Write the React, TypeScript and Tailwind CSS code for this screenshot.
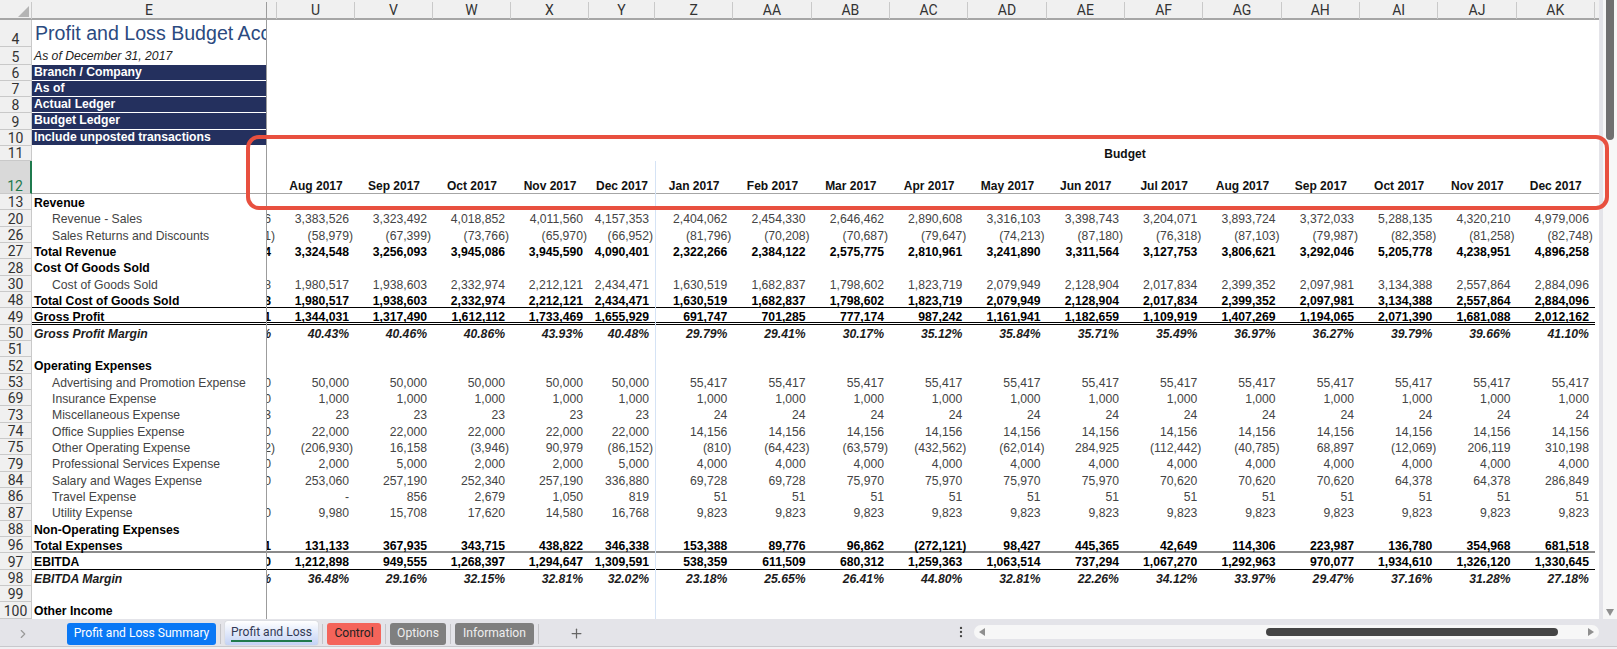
import { ChevronRight, EllipsisVertical, Plus } from "lucide-react";

const cols =
  "grid grid-cols-[32px_235px_10px_78px_78px_78px_78px_66px_repeat(12,78.33px)]";

const letters = ["U", "V", "W", "X", "Y", "Z", "AA", "AB", "AC", "AD", "AE", "AF", "AG", "AH", "AI", "AJ", "AK"];
const months = ["Aug 2017", "Sep 2017", "Oct 2017", "Nov 2017", "Dec 2017", "Jan 2017", "Feb 2017", "Mar 2017", "Apr 2017", "May 2017", "Jun 2017", "Jul 2017", "Aug 2017", "Sep 2017", "Oct 2017", "Nov 2017", "Dec 2017"];

function fill(a: string, b: string) {
  return [...Array(5).fill(a), ...Array(12).fill(b)] as string[];
}
function split(s: string) {
  return s.split(" ");
}

type Row = {
  n: number;
  label?: string;
  t?: string;
  kind?: "plain" | "sub" | "bold" | "margin";
  line?: string;
  vals?: string[];
};

const cogs = split("1,980,517 1,938,603 2,332,974 2,212,121 2,434,471 1,630,519 1,682,837 1,798,602 1,823,719 2,079,949 2,128,904 2,017,834 2,399,352 2,097,981 3,134,388 2,557,864 2,884,096");

const rows: Row[] = [
  { n: 13, label: "Revenue", kind: "bold" },
  { n: 20, label: "Revenue - Sales", kind: "sub", t: "6", vals: split("3,383,526 3,323,492 4,018,852 4,011,560 4,157,353 2,404,062 2,454,330 2,646,462 2,890,608 3,316,103 3,398,743 3,204,071 3,893,724 3,372,033 5,288,135 4,320,210 4,979,006") },
  { n: 26, label: "Sales Returns and Discounts", kind: "sub", t: "1)", vals: split("(58,979) (67,399) (73,766) (65,970) (66,952) (81,796) (70,208) (70,687) (79,647) (74,213) (87,180) (76,318) (87,103) (79,987) (82,358) (81,258) (82,748)") },
  { n: 27, label: "Total Revenue", kind: "bold", t: "4", vals: split("3,324,548 3,256,093 3,945,086 3,945,590 4,090,401 2,322,266 2,384,122 2,575,775 2,810,961 3,241,890 3,311,564 3,127,753 3,806,621 3,292,046 5,205,778 4,238,951 4,896,258") },
  { n: 28, label: "Cost Of Goods Sold", kind: "bold" },
  { n: 30, label: "Cost of Goods Sold", kind: "sub", t: "8", vals: cogs },
  { n: 48, label: "Total Cost of Goods Sold", kind: "bold", t: "8", vals: cogs, line: "border-b border-black" },
  { n: 49, label: "Gross Profit", kind: "bold", t: "1", line: "border-b-[3px] border-double border-black", vals: split("1,344,031 1,317,490 1,612,112 1,733,469 1,655,929 691,747 701,285 777,174 987,242 1,161,941 1,182,659 1,109,919 1,407,269 1,194,065 2,071,390 1,681,088 2,012,162") },
  { n: 50, label: "Gross Profit Margin", kind: "margin", t: "%", vals: split("40.43% 40.46% 40.86% 43.93% 40.48% 29.79% 29.41% 30.17% 35.12% 35.84% 35.71% 35.49% 36.97% 36.27% 39.79% 39.66% 41.10%") },
  { n: 51 },
  { n: 52, label: "Operating Expenses", kind: "bold" },
  { n: 53, label: "Advertising and Promotion Expense", kind: "sub", t: "0", vals: fill("50,000", "55,417") },
  { n: 69, label: "Insurance Expense", kind: "sub", t: "0", vals: fill("1,000", "1,000") },
  { n: 73, label: "Miscellaneous Expense", kind: "sub", t: "3", vals: fill("23", "24") },
  { n: 74, label: "Office Supplies Expense", kind: "sub", t: "0", vals: fill("22,000", "14,156") },
  { n: 75, label: "Other Operating Expense", kind: "sub", t: "2)", vals: split("(206,930) 16,158 (3,946) 90,979 (86,152) (810) (64,423) (63,579) (432,562) (62,014) 284,925 (112,442) (40,785) 68,897 (12,069) 206,119 310,198") },
  { n: 79, label: "Professional Services Expense", kind: "sub", t: "0", vals: split("2,000 5,000 2,000 2,000 5,000 4,000 4,000 4,000 4,000 4,000 4,000 4,000 4,000 4,000 4,000 4,000 4,000") },
  { n: 84, label: "Salary and Wages Expense", kind: "sub", t: "0", vals: split("253,060 257,190 252,340 257,190 336,880 69,728 69,728 75,970 75,970 75,970 75,970 70,620 70,620 70,620 64,378 64,378 286,849") },
  { n: 86, label: "Travel Expense", kind: "sub", vals: split("- 856 2,679 1,050 819 51 51 51 51 51 51 51 51 51 51 51 51") },
  { n: 87, label: "Utility Expense", kind: "sub", t: "0", vals: split("9,980 15,708 17,620 14,580 16,768 9,823 9,823 9,823 9,823 9,823 9,823 9,823 9,823 9,823 9,823 9,823 9,823") },
  { n: 88, label: "Non-Operating Expenses", kind: "bold" },
  { n: 96, label: "Total Expenses", kind: "bold", t: "1", line: "border-b-2 border-[#8a8a8a]", vals: split("131,133 367,935 343,715 438,822 346,338 153,388 89,776 96,862 (272,121) 98,427 445,365 42,649 114,306 223,987 136,780 354,968 681,518") },
  { n: 97, label: "EBITDA", kind: "bold", t: "0", line: "border-b border-black", vals: split("1,212,898 949,555 1,268,397 1,294,647 1,309,591 538,359 611,509 680,312 1,259,363 1,063,514 737,294 1,067,270 1,292,963 970,077 1,934,610 1,326,120 1,330,645") },
  { n: 98, label: "EBITDA Margin", kind: "margin", t: "%", vals: split("36.48% 29.16% 32.15% 32.81% 32.02% 23.18% 25.65% 26.41% 44.80% 32.81% 22.26% 34.12% 33.97% 29.47% 37.16% 31.28% 27.18%") },
  { n: 99 },
  { n: 100, label: "Other Income", kind: "bold" },
];

const navy = ["Branch / Company", "As of", "Actual Ledger", "Budget Ledger", "Include unposted transactions"];

function textStyle(kind?: Row["kind"]) {
  if (kind === "bold") return "font-bold text-black";
  if (kind === "margin") return "font-bold italic text-[#1c1c1c]";
  return "text-[#444444]";
}

function RowNo({ n, h, active }: { n: number; h: string; active?: boolean }) {
  return (
    <div
      className={`${h} flex items-end justify-center border-b border-r border-[#c9c9c9] font-[Roboto,sans-serif] text-[14px] leading-[14px] ${
        active ? "border-r-2 border-r-[#1f7a4d] bg-[#d9d9d9] text-[#1f7a4d]" : "bg-[#f0f0f0] text-[#333333]"
      }`}
    >
      {n}
    </div>
  );
}

function FreezeCell({ h, children }: { h: string; children?: React.ReactNode }) {
  return <div className={`${h} min-w-0 overflow-hidden border-r border-[#9c9c9c]`}>{children}</div>;
}

function Value({ v, kind }: { v: string; kind?: Row["kind"] }) {
  const neg = v.endsWith(")");
  return (
    <div className={`flex h-full items-center justify-end whitespace-nowrap pr-[6px] pt-[1px] ${textStyle(kind)}`}>
      <span className={neg ? "mr-[-4px]" : ""}>{v}</span>
    </div>
  );
}

function ColumnHeader() {
  return (
    <div className={`${cols} h-[20px] border-b-2 border-[#a6a6a6] bg-[#f0f0f0] pt-[2px] font-[Roboto,sans-serif] text-[14px] leading-[17px] text-[#333333]`}>
      <div className="flex items-end justify-end border-r border-[#c9c9c9] p-[2px]">
        <svg width="11" height="11" viewBox="0 0 11 11">
          <polygon points="11,0 11,11 0,11" fill="#b4b4b4" />
        </svg>
      </div>
      <div className="border-r border-[#9c9c9c] text-center">E</div>
      <div className="border-r border-[#c9c9c9]" />
      {letters.map((l) => (
        <div key={l} className="border-r border-[#c9c9c9] text-center">
          {l}
        </div>
      ))}
    </div>
  );
}

function TopRows() {
  return (
    <div className="flex w-[277px] flex-col">
      <div className="grid grid-cols-[32px_235px_10px]">
        <RowNo n={4} h="h-[27px]" />
        <FreezeCell h="h-[27px]">
          <div className="whitespace-nowrap pl-[3px] text-[19.6px] leading-[26px] text-[#2b4a80]">Profit and Loss Budget Account</div>
        </FreezeCell>
        <div />
        <RowNo n={5} h="h-[17.5px]" />
        <FreezeCell h="h-[17.5px]">
          <div className="pl-[2px] text-[12.2px] italic leading-[19px] text-[#222222]">As of December 31, 2017</div>
        </FreezeCell>
        <div />
        {navy.map((t, i) => (
          <div key={t} className="contents">
            <RowNo n={6 + i} h="h-[16.33px]" />
            <FreezeCell h="h-[16.33px]">
              <div className="h-full border-b border-white bg-[#24305e] pl-[2px] text-[12.2px] font-bold leading-[15.33px] text-white">{t}</div>
            </FreezeCell>
            <div />
          </div>
        ))}
        <RowNo n={11} h="h-[14.85px]" />
        <FreezeCell h="h-[14.85px]" />
        <div />
      </div>
    </div>
  );
}

function Sheet() {
  return (
    <div className="relative flex min-w-0 flex-1 flex-col">
      <ColumnHeader />
      <div className="relative h-[141px]">
        <TopRows />
      </div>
      <div className={`${cols} h-[33px] border-b border-[#a6a6a6]`}>
        <RowNo n={12} h="h-[33px]" active />
        <FreezeCell h="h-[33px]" />
        <div />
        {months.map((m, i) => (
          <div key={i} className="flex h-[32px] items-end justify-center text-[12px] font-bold leading-[14px] text-[#111111]">
            {m}
          </div>
        ))}
      </div>
      {rows.map((r) => (
        <div key={r.n} className={`${cols} h-[16.33px] text-[12.2px] leading-[16px]`}>
          <RowNo n={r.n} h="h-[16.33px]" />
          <div className={`col-span-19 grid grid-cols-subgrid ${r.line ?? ""} h-[16.33px]`}>
            <div className={`flex h-full items-center whitespace-nowrap border-r border-[#9c9c9c] pt-[1px] ${r.kind === "sub" ? "pl-[20px]" : "pl-[2px]"} ${textStyle(r.kind)}`}>
              {r.label}
            </div>
            <div className="min-w-0 overflow-hidden">{r.t && <Value v={r.t} kind={r.kind} />}</div>
            {(r.vals ?? Array(17).fill("")).map((v, i) => (
              <Value key={i} v={v} kind={r.kind} />
            ))}
          </div>
        </div>
      ))}
      {/* divider between actual and budget months */}
      <div className="absolute left-[655px] top-[161px] h-[458px] w-px bg-[#d5e3f5]" />
      {/* merged Budget header */}
      <div className="absolute left-[655px] top-[146px] w-[940px] text-center text-[12px] font-bold leading-[16px] text-[#111111]">Budget</div>
    </div>
  );
}

function VerticalScroll() {
  return (
    <div className="flex h-[619px] w-[18px] flex-col items-center bg-[#e4e4e9] pl-[4px]">
      <div className="flex h-full w-full flex-col items-center justify-between bg-[#f7f7f7] pb-[3px]">
        <div className="h-[140px] w-[8px] rounded-b-[4px] bg-[#707070]" />
        <svg width="8" height="7" viewBox="0 0 8 7">
          <polygon points="0,0 8,0 4,7" fill="#8f8f8f" />
        </svg>
      </div>
    </div>
  );
}

function Tab({ children, className }: { children: React.ReactNode; className: string }) {
  return <div className={`flex h-[22px] items-center justify-center whitespace-nowrap rounded-[3px] text-[12.1px] ${className}`}>{children}</div>;
}

function Sep() {
  return <div className="mx-[4px] h-[20px] w-px bg-[#c4c4c8]" />;
}

function TabBar() {
  return (
    <div className="flex h-[27px] items-center bg-[#e4e4e9] pt-[2px] font-[Roboto,sans-serif]">
      <div className="flex w-[67px] justify-center pr-[22px]">
        <ChevronRight size={14} className="text-[#9a9a9a]" />
      </div>
      <Tab className="w-[149px] bg-[#0a78f5] text-white">Profit and Loss Summary</Tab>
      <Sep />
      <div className="mb-[2px] flex h-[24px] w-[93px] flex-col items-center justify-center whitespace-nowrap rounded-[3px] bg-linear-to-b from-white to-[#c3d2f5] text-[12.1px] leading-[16px] text-[#333a55] shadow-[0_0_1px_#99aaaa]">
        <span className="border-b-2 border-[#1f7a4d]">Profit and Loss</span>
      </div>
      <Sep />
      <Tab className="w-[54px] bg-[#f4645a] text-[#222222]">Control</Tab>
      <Sep />
      <Tab className="w-[56px] bg-[#7f7f7f] text-[#eeeeee]">Options</Tab>
      <Sep />
      <Tab className="w-[79px] bg-[#7f7f7f] text-[#eeeeee]">Information</Tab>
      <Sep />
      <div className="flex w-[66px] justify-center">
        <Plus size={15} className="text-[#666666]" />
      </div>
      <div className="mb-[3px] flex flex-1 justify-end pr-[6px]">
        <EllipsisVertical size={14} className="text-[#444444]" />
      </div>
      <div className="mb-[3px] flex h-[14px] w-[625px] items-center justify-between rounded-[7px] bg-[#f7f7f7] px-[5px]">
        <svg width="6" height="8" viewBox="0 0 6 8">
          <polygon points="6,0 6,8 0,4" fill="#8f8f8f" />
        </svg>
        <div className="ml-[264px] mr-[14px] h-[8px] w-[292px] rounded-[4px] bg-[#444444]" />
        <svg width="6" height="8" viewBox="0 0 6 8">
          <polygon points="0,0 0,8 6,4" fill="#8f8f8f" />
        </svg>
      </div>
      <div className="w-[18px]" />
    </div>
  );
}

export default function App() {
  return (
    <div className="relative flex h-[649px] w-[1617px] flex-col overflow-hidden bg-white font-[Liberation_Sans,sans-serif]">
      <div className="flex h-[619px]">
        <Sheet />
        <VerticalScroll />
      </div>
      <TabBar />
      <div className="h-[3px] border-t border-[#c8c8cc] bg-[#f0f0f3]" />
      {/* red callout around the header band */}
      <div className="absolute left-[246px] top-[135px] h-[75px] w-[1363px] rounded-[13px] border-4 border-[#e8503f]" />
    </div>
  );
}
